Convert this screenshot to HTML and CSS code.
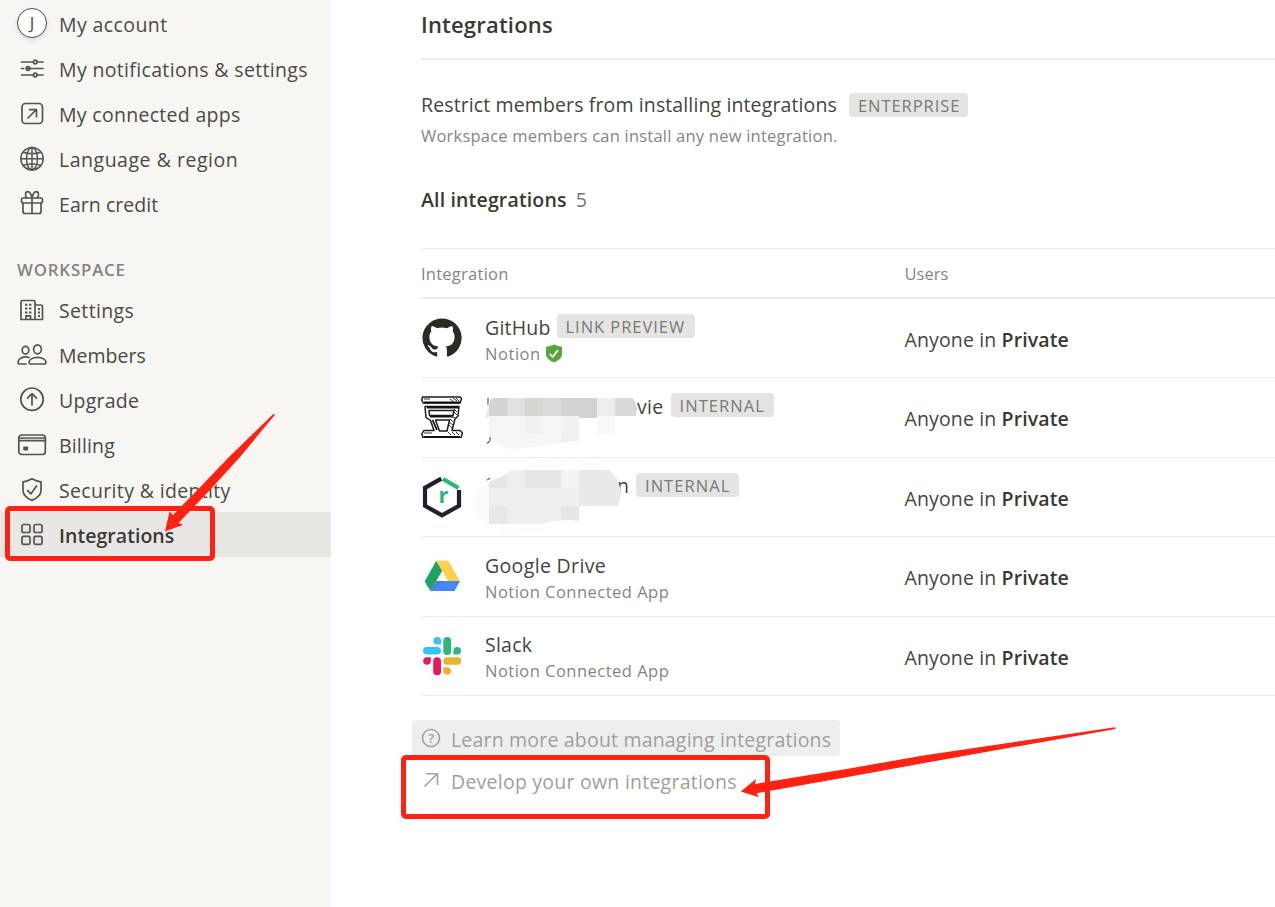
FILE: index.html
```html
<!DOCTYPE html>
<html lang="en">
<head>
<meta charset="utf-8">
<title>Integrations</title>
<link rel="stylesheet" href="styles.css">
</head>
<body>
<div class="app">
  <nav class="sidebar">
    <a class="item"><span class="avatar">J</span><span class="t1">My account</span></a>
    <a class="item"><svg class="ico" viewBox="0 0 30 30"><path d="M4.500 8h12M20 8h6M4.500 14.500h2M10.500 14.500h15.500M4.500 21h12M20 21h6"/><circle cx="18.200" cy="8" r="1.800"/><circle cx="11" cy="14.500" r="1.800"/><circle cx="18.200" cy="21" r="1.800"/></svg><span class="t2">My notifications &amp; settings</span></a>
    <a class="item"><svg class="ico" viewBox="0 0 30 30"><rect x="5" y="4.500" width="20.500" height="20" rx="3.500"/><path d="M11 19l8-8M12.500 10.700h7v7"/></svg><span class="t3">My connected apps</span></a>
    <a class="item"><svg class="ico thin" viewBox="0 0 30 30"><circle cx="15" cy="14.700" r="11.200"/><ellipse cx="15" cy="14.700" rx="5.500" ry="11.200"/><path d="M15 4v22M4 14.700h22M6.500 8.200q8.500 3 17 0M6.500 21.200q8.500-3 17 0"/></svg><span class="t4">Language &amp; region</span></a>
    <a class="item"><svg class="ico" viewBox="0 0 30 30"><rect x="4.500" y="9" width="21" height="5" rx="1.500"/><path d="M6 14v8.500q0 2 2 2h14q2 0 2-2V14M15 9v15.500M15 9C14 4.500 12.500 2.700 10.800 2.700 8 2.700 7.800 7 10 8.800M15 9C16 4.500 17.500 2.700 19.200 2.700 22 2.700 22.200 7 20 8.800"/></svg><span class="t5">Earn credit</span></a>
    <h2 class="group">WORKSPACE</h2>
    <div class="items">
    <a class="item"><svg class="ico" viewBox="0 0 30 30"><path d="M4 24.500V7q0-1.500 1.500-1.500h11Q18 5.500 18 7v17.500zM18 10h6q1.500 0 1.500 1.500v13H4M9 24.500v-3.700h4.500v3.700"/><path class="dots" d="M8 9.700h2.400M12 9.700h2.400M8 13.500h2.400M12 13.500h2.400M8 17.500h2.400M12 17.500h2.400M21 14h2M21 17.500h2M21 21h2"/></svg><span class="t6">Settings</span></a>
    <a class="item"><svg class="ico" viewBox="0 0 30 30"><ellipse cx="8.500" cy="10.300" rx="3.300" ry="3.900"/><ellipse cx="20.500" cy="9.300" rx="3.900" ry="4.500"/><path d="M12 17.500Q10.500 16.800 8.500 16.800C4 16.800 1 19.800 1 22.500q0 1.500 1.500 1.500H9M13.500 24h14q1.500 0 1.500-1.500c0-2.700-3.500-5.200-8.500-5.200S12 19.800 12 22.500q0 1.500 1.500 1.500z"/></svg><span>Members</span></a>
    <a class="item"><svg class="ico" viewBox="0 0 30 30"><circle cx="15" cy="14.200" r="11.200"/><path d="M15 20V9M10.500 13.200L15 8.700l4.500 4.500"/></svg><span class="t8">Upgrade</span></a>
    <a class="item"><svg class="ico" viewBox="0 0 30 30"><rect x="1.800" y="5" width="26.500" height="19.500" rx="3"/><path d="M2 8h26.500M2 10.700h26.500"/><rect class="fill" x="6.200" y="16.500" width="5" height="4" rx="1"/></svg><span class="t9">Billing</span></a>
    <a class="item"><svg class="ico" viewBox="0 0 30 30"><path d="M15 3.800q4.500 2.700 9 3v8.700c0 5-4 7.700-9 9.900-5-2.200-9-4.900-9-9.900V6.800q4.500-.3 9-3zM10.500 15.300l3.300 3.600 5.700-7.900"/></svg><span class="t10">Security &amp; identity</span></a>
    <a class="item active"><svg class="ico" viewBox="0 0 30 30"><rect x="5" y="4.500" width="8" height="8" rx="1.700"/><rect x="17" y="4.500" width="8" height="8" rx="1.700"/><rect x="5" y="16.300" width="8" height="8" rx="1.700"/><rect x="17" y="16.300" width="8" height="8" rx="1.700"/></svg><span class="t11">Integrations</span></a>
    </div>
  </nav>
  <main class="main">
    <h1 class="title"><span class="t12">Integrations</span></h1>
    <section class="restrict">
      <div class="line"><span class="name t13">Restrict members from installing integrations</span><span class="tag wide">ENTERPRISE</span></div>
      <p class="hint">Workspace members can install any new integration.</p>
    </section>
    <h3 class="all"><span class="t14">All integrations</span><span class="count">5</span></h3>
    <div class="head"><span class="c1">Integration</span><span>Users</span></div>
    <div class="row">
      <svg class="logo" viewBox="0 0 42 42"><path fill="#2b2a25" d="M21 1.500a19.500 19.500 0 0 0-6.200 38c1 .2 1.400-.4 1.400-1v-3.400c-5.500 1.200-6.700-2.600-6.700-2.600-.9-2.300-2.200-3-2.200-3-1.800-1.200.1-1.200.1-1.200 2 .2 3 2.100 3 2.100 1.800 3 4.600 2.200 5.700 1.700.2-1.300.7-2.200 1.300-2.700-4.400-.5-9-2.200-9-9.700 0-2.100.8-3.900 2-5.200-.2-.5-.9-2.500.2-5.200 0 0 1.700-.5 5.400 2a18.700 18.700 0 0 1 10 0c3.700-2.500 5.400-2 5.400-2 1.100 2.700.4 4.700.2 5.200 1.200 1.300 2 3.100 2 5.200 0 7.500-4.600 9.200-9 9.700.7.600 1.300 1.800 1.300 3.600v5.500c0 .6.400 1.200 1.400 1A19.500 19.500 0 0 0 21 1.500z"/></svg>
      <div class="info"><div class="line"><span class="name t15">GitHub</span><span class="tag link">LINK PREVIEW</span></div>
      <div class="sub"><span class="t16">Notion</span><svg class="badge" viewBox="0 0 18 19"><path fill="#55a63c" d="M9 .5q4 2 8 2.200V10c0 4-3.500 6.700-8 8.500C4.500 16.700 1 14 1 10V2.700Q5 2.500 9 .5z"/><path fill="none" stroke="#fff" stroke-width="1.800" d="M4.800 9.800l3 3L13 6"/></svg></div></div>
      <div class="who">Anyone in <b>Private</b></div>
    </div>
    <div class="row">
      <svg class="logo" viewBox="0 0 42 42"><g fill="#fff" stroke="#1c1c1c" stroke-width="1.500" stroke-linejoin="round"><path d="M1.500 1h38l1 2-1.500 4H2L.8 4z"/><path d="M4 10.500h34l-1 9.500-3 3-3 11.500h8l2.500 2.500-1.500 4.500H2L.8 38l2-3.500H13L9.500 24.500 5 21.500z"/><path d="M8 14.500h25l-1 5H8.500zM14.500 24h14L26 35h-7.500z"/></g><path d="M3 6.500h36M3 41h36M6 11.500h31M9 20.500h23M16 34l-4.500-10" fill="none" stroke="#111" stroke-width="1.800"/><path d="M29 3l4 3M32 2l4 3M35 2l3 3M33 13l3 3M33 16l3 3M30 20l4 2M29 23l3 3M28 26l4 3M28 29l3 3M27 36l3 3M31 36l3 3M35 36l3 3M3 3h6M3 37h8" fill="none" stroke="#333" stroke-width="1"/></svg>
      <div class="info"><div class="line"><span class="name masked-a">vie</span><span class="tag int">INTERNAL</span></div><div class="sub">&nbsp;</div></div>
      <svg class="smudge first" viewBox="0 0 160 64">
        <path d="M4 6v7M6 45q1 5-3 6" fill="none" stroke="#66645f" stroke-width="1.300"/>
        <path fill="#ededed" d="M5 10L1 26h4z"/><path fill="#d3d3d1" d="M5 26V12q1-6 6-6h12v20z"/><path fill="#e1e1df" d="M23 6h18v20H23z"/><path fill="#d6d6d3" d="M41 6h18v20H41z"/><path fill="#dcdbda" d="M59 6h18v20H59z"/><path fill="#d2d2d0" d="M77 6h36v20H77z"/><path fill="#eee" d="M113 6h18v20h-18z"/><path fill="#dadad8" d="M131 6h18l4 9-1 9h-21z"/>
        <path fill="#f5f5f3" d="M5 24h72v18H5z"/><path fill="#f1f1ef" d="M41 24h18v18H41zM77 24h18v18H77z"/><path fill="#f9f9f9" d="M113 24h18v18h-18z"/><path fill="#f6f6f5" d="M5 42h90v6.500L40 56C20 59 10 53 5 42z"/><path fill="#f0f0ef" d="M77 42h18v6.500l-18 2z"/>
      </svg>
      <div class="who">Anyone in <b>Private</b></div>
    </div>
    <div class="row">
      <svg class="logo" viewBox="0 0 42 42"><path fill="none" stroke="#1f2230" stroke-width="4.200" d="M20.300 2.700L4 11.800v18L21 39.300l17-9.500V14"/><path fill="none" stroke="#28b876" stroke-width="4.200" d="M22 3l15.500 9"/><text class="logo-r" x="17.500" y="27">r</text></svg>
      <div class="info"><div class="line"><span class="name masked-b">n</span><span class="tag int">INTERNAL</span></div><div class="sub">&nbsp;</div></div>
      <svg class="smudge second" viewBox="0 0 160 80">
        <path fill="#fdfdfb" d="M30 16C60-5 120-5 138 14l-30 46C80 62 70 78 25 77z"/><path d="M13 22q2-1 3-2" stroke="#777" stroke-width="1.500"/>
        <path fill="#fafafa" d="M1 48C0 36 6 28 15 25v42Q3 60 1 48z"/><path fill="#eeeeec" d="M15 24q13-4 23-12h95q11 10 14 24l-4 12h-38v15q-18-3-37 3H15z"/><path fill="#e6e6e4" d="M15 24l18-8v14H15zM51 12h36v18H51zM87 48h18v15q-9-2-18-1z"/><path fill="#e8e8e6" d="M15 48h18v18H15z"/><path fill="#f3f3f3" d="M87 12h18v18H87z"/><path fill="#efefef" d="M87 30h18v18H87z"/><path fill="#e9e9e8" d="M105 12h30q10 8 12 22l-3 14h-39z"/>
      </svg>
      <div class="who">Anyone in <b>Private</b></div>
    </div>
    <div class="row">
      <svg class="logo" viewBox="0 0 42 42"><path fill="#1ea362" d="M15.200 5.700l6.300 9.500L9.500 36 3.700 26.500z"/><path fill="#ffd04b" d="M15.200 5.700h12L39 26H27z"/><path fill="#4688f4" d="M15.500 26H39l-5.500 10h-24z"/><path fill="#3a70d0" opacity=".5" d="M15.500 26h6L9.500 36z"/></svg>
      <div class="info"><div class="line"><span class="name t17">Google Drive</span></div><div class="sub conn">Notion Connected App</div></div>
      <div class="who">Anyone in <b>Private</b></div>
    </div>
    <div class="row">
      <svg class="logo" viewBox="0 0 42 42"><g fill="#36c5f0"><rect x="2" y="12" width="18" height="7.600" rx="3.800"/><path d="M20 9.600h-3.800a3.800 3.800 0 1 1 3.800-3.800z"/></g><g fill="#2eb67d"><rect x="22.300" y="2" width="7.800" height="18" rx="3.800"/><path d="M32.400 19.600v-3.800a3.800 3.800 0 1 1 3.800 3.800z"/></g><g fill="#ecb22e"><rect x="22.300" y="22.200" width="18" height="7.600" rx="3.800"/><path d="M22.300 32.200h3.800a3.800 3.800 0 1 1-3.800 3.800z"/></g><g fill="#e01e5a"><rect x="12.200" y="22.200" width="7.800" height="18" rx="3.800"/><path d="M9.800 22.200V26A3.800 3.800 0 1 1 6 22.200z"/></g></svg>
      <div class="info"><div class="line"><span class="name t18">Slack</span></div><div class="sub conn">Notion Connected App</div></div>
      <div class="who">Anyone in <b>Private</b></div>
    </div>
    <div class="links">
      <a class="more hover"><svg class="mini" viewBox="0 0 20 20"><circle cx="10" cy="10" r="8.500"/><text class="q" x="7.200" y="14.500">?</text></svg><span class="t19">Learn more about managing integrations</span></a>
      <a class="more"><svg class="mini" viewBox="0 0 20 20"><path d="M3.500 16.500L16 4M5 3.800h11.500V15"/></svg><span class="t20">Develop your own integrations</span></a>
    </div>
  </main>
  <svg class="marks" viewBox="0 0 1275 907"><g fill="none" stroke="#ff2213" stroke-width="5"><rect x="7.500" y="508.500" width="205" height="50" rx="2.500"/><rect x="403.500" y="757.500" width="364" height="59" rx="2.500"/></g><g fill="#ff2213"><path d="M165 531.500L169.500 511.500 173 515 199.300 488 229 457 273.500 413.800 274.800 415 240 457 210 490 178.500 523 183.300 524.700z"/><path d="M740.700 791.500L756 779 755 784 845 769.300 921.700 755.700 1115 727.300 1115.500 729 921.700 763.500 845 777.500 756.500 793.300 759 797.300z"/></g></svg>
</div>
</body>
</html>
```
FILE: styles.css
```css
* { box-sizing: border-box; }
body { margin: 0; font-family: "Open Sans", "Noto Sans", sans-serif; font-size: 19.5px; color: #454440; background: #fff; }
h1, h2, h3, p { margin: 0; }
.app { position: relative; display: flex; width: 1275px; height: 907px; overflow: hidden; }

.sidebar { width: 331px; flex: none; background: #f7f6f3; padding-top: 2px; color: #4b4a46; }
.item { display: flex; align-items: center; height: 45px; padding-left: 17px; gap: 12px; white-space: nowrap; }
.items .item { padding-top: 2px; }
.item.active { background: #e8e7e4; font-weight: 600; color: #3b3a36; }
.ico { width: 30px; height: 30px; flex: none; margin-top: -2px; fill: none; stroke: #55544f; stroke-width: 1.7; stroke-linecap: round; stroke-linejoin: round; }
.ico.thin { stroke-width: 1.5; }
.ico .dots { stroke-linecap: butt; stroke-width: 2; }
.ico .fill { fill: #55544f; stroke: none; }
.avatar { width: 30px; height: 30px; flex: none; margin-top: -3px; border: 1px solid #4b4a46; border-radius: 50%; background: #fff; text-align: center; font-size: 17px; line-height: 27px; box-shadow: 0 2px 5px rgba(0,0,0,.12); }
.group { height: 60px; padding: 32px 0 0 17px; font-size: 16.8px; line-height: 21px; font-weight: 600; color: #84837f; letter-spacing: .85px; }

.t1 { letter-spacing: .4px; }
.t2 { letter-spacing: .34px; }
.t3 { letter-spacing: .3px; }
.t4 { letter-spacing: .52px; }
.t5 { letter-spacing: .05px; }
.t6 { letter-spacing: .36px; }
.t8 { letter-spacing: .25px; }
.t9 { letter-spacing: .15px; }
.t10 { letter-spacing: .34px; }
.t11 { letter-spacing: .05px; }
.t12 { letter-spacing: .2px; }
.t13 { letter-spacing: .12px; }
.t14 { letter-spacing: .16px; }
.t15 { letter-spacing: .2px; }
.t16 { letter-spacing: .55px; }
.t17 { letter-spacing: .35px; }
.t18 { letter-spacing: .25px; }
.t19 { letter-spacing: .19px; }
.t20 { letter-spacing: .24px; }

.main { flex: 1; padding-left: 90px; white-space: nowrap; }
.title { height: 60px; border-bottom: 2px solid #ededec; font-size: 22px; line-height: 49px; font-weight: 600; color: #393833; }
.restrict { height: 120px; padding-top: 31px; }
.restrict .name { margin-top: -2px; }
.line { display: flex; align-items: center; height: 28px; }
.tag { height: 24px; border-radius: 4px; background: #e4e4e2; color: #7a7975; font-size: 16.5px; line-height: 25px; padding-left: 9px; letter-spacing: .95px; }
.tag.wide { width: 119px; margin-left: 12px; }
.tag.link { width: 138px; margin: -2px 0 0 6px; }
.tag.int { width: 103px; margin: -2px 0 0 7px; letter-spacing: 1.05px; }
.hint { font-size: 16.5px; line-height: 34px; color: #85847f; letter-spacing: .22px; }
.all { height: 68px; padding-top: 6px; font-size: 19.5px; line-height: 28px; font-weight: 600; color: #393833; }
.count { margin-left: 9px; font-weight: 400; color: #75746f; }
.head { height: 51px; display: flex; align-items: center; border-top: 1px solid #ebebea; border-bottom: 2px solid #ebebea; font-size: 16.5px; color: #85847f; }
.c1 { width: 483.5px; letter-spacing: .25px; }
.row { position: relative; display: flex; height: 79.4px; border-bottom: 1.4px solid #ebebea; }
.logo { width: 42px; height: 42px; flex: none; margin: 18px 22px 0 0; }
.logo-r { font: 700 22px "Open Sans", sans-serif; fill: #28b876; }
.info { width: 419.5px; padding-top: 14px; }
.sub { display: flex; align-items: center; height: 24px; font-size: 16.5px; color: #85847f; }
.conn { letter-spacing: .48px; }
.badge { width: 18px; height: 19px; margin-left: 4px; }
.who { padding-top: 27px; line-height: 28px; letter-spacing: .13px; }
.who b { font-weight: 600; color: #393833; }
.masked-a { padding-left: 152px; letter-spacing: .3px; }
.masked-b { padding-left: 132px; }
.smudge { position: absolute; }
.smudge.first { width: 160px; height: 64px; left: 63px; top: 14px; }
.smudge.second { width: 160px; height: 80px; left: 53px; top: 0; }

.links { margin: 24px 0 0 -9px; display: flex; flex-direction: column; align-items: flex-start; gap: 6px; color: #a09f9b; }
.more { display: flex; align-items: center; gap: 10px; height: 36px; padding: 3px 9px 0; border-radius: 4px; }
.more.hover { background: #eee; }
.mini { width: 20px; height: 20px; margin-top: -2px; fill: none; stroke: #a3a29e; stroke-width: 1.6; }
.q { font: 600 13px "Open Sans", sans-serif; fill: #a3a29e; stroke: none; }
.marks { position: absolute; left: 0; top: 0; width: 1275px; height: 907px; pointer-events: none; }
```
